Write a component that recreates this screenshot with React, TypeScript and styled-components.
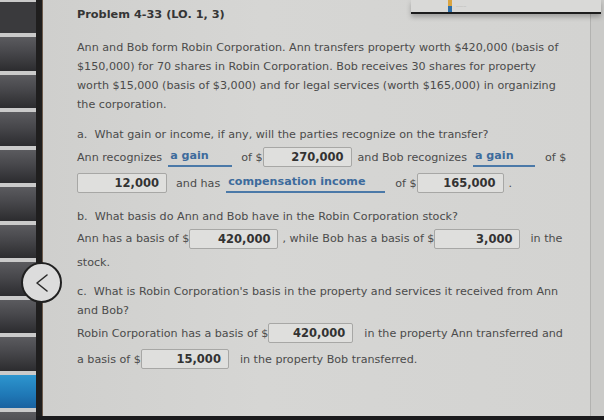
import React from 'react';
import styled, { createGlobalStyle } from 'styled-components';

const GlobalStyle = createGlobalStyle`
	html, body {
		margin: 0;
		padding: 0;
		background: #1b1b1d;
	}
	* {
		box-sizing: border-box;
	}
`;

const Screen = styled.div`
	position: relative;
	width: 604px;
	height: 420px;
	display: flex;
	flex-direction: row;
	overflow: hidden;
	background: #1b1b1d;
	font-family: 'DejaVu Sans', Verdana, sans-serif;
`;

const Rail = styled.ul`
	width: 36px;
	margin: 0;
	padding: 33px 0 0;
	list-style: none;
	display: flex;
	flex-direction: column;
	background: linear-gradient(to bottom, #c9c9c9 0 2px, #3a3a3d 2px);
`;

const RailItem = styled.li<{ $active?: boolean }>`
	flex: 0 0 37.5px;
	border-top: 4px solid #cacaca;
	background: ${({ $active }) =>
		$active
			? 'linear-gradient(to bottom, #2d96cf, #1f78b6 60%, #1a62a0)'
			: 'linear-gradient(to bottom, #5b5b5f, #47474b 45%, #2c2c2f)'};
`;

const Divider = styled.div`
	width: 7px;
	height: 416px;
	background: #1f1e1e;
	border-right: 1px solid #6b5a4c;
`;

const Panel = styled.main`
	flex: 1;
	height: 416px;
	background: linear-gradient(to right, #cfcfcd, #d6d6d4 40%, #d3d3d1);
	padding: 7px 0 0 34px;
	color: #4b4b4b;
	font-size: 11.15px;
`;

const EdgeStrip = styled.div`
	width: 14px;
	height: 416px;
	background: #cacac8;
	border-left: 1px solid #b2b2b0;
`;

const Title = styled.h1`
	margin: 0;
	font-size: 11.3px;
	line-height: 15px;
	font-weight: bold;
	color: #353535;
`;

const Intro = styled.p`
	margin: 16px 0 0;
	line-height: 19px;
	width: 490px;
`;

const Question = styled.p<{ $gap?: number }>`
	margin: ${({ $gap }) => $gap ?? 12}px 0 0;
	line-height: 19px;
	width: 490px;
`;

const Part = styled.span`
	margin-right: 7px;
`;

const Answer = styled.div<{ $height?: number }>`
	display: flex;
	align-items: center;
	flex-wrap: nowrap;
	height: ${({ $height }) => $height ?? 25}px;
	white-space: nowrap;
`;

const Blank = styled.span<{ $width: number }>`
	display: inline-flex;
	align-items: center;
	justify-content: flex-end;
	width: ${({ $width }) => $width}px;
	height: 20px;
	padding-right: 7px;
	border: 1px solid #a7a7a5;
	border-radius: 2px;
	background: #dfdfdd;
	color: #333;
	font-weight: bold;
	font-size: 11.5px;
`;

const Choice = styled.span<{ $width: number }>`
	display: inline-block;
	width: ${({ $width }) => $width}px;
	margin: 2px 6px 0;
	padding: 0 2px 2px;
	border-bottom: 2px solid #4b79a8;
	color: #3d6b9c;
	font-weight: bold;
	line-height: 14px;
`;

const Gap = styled.span<{ $w: number }>`
	display: inline-block;
	width: ${({ $w }) => $w}px;
`;

const TopWindow = styled.div`
	position: absolute;
	top: 0;
	left: 411px;
	width: 190px;
	height: 14px;
	background: #d9d9d7;
	border-bottom: 2px solid #1d1d1d;
	box-shadow: 0 3px 5px rgba(0, 0, 0, 0.25);
	display: flex;
	align-items: center;
	gap: 4px;
	padding-left: 37px;
`;

const TinyIcon = styled.span`
	width: 4px;
	height: 12px;
	background: linear-gradient(to bottom, #d9a441 0 6px, #2d6ea8 6px);
`;

const TinyLabel = styled.span`
	font-size: 4px;
	color: #8c8c8c;
`;

const BackButton = styled.button`
	position: absolute;
	left: 21px;
	top: 262px;
	width: 41px;
	height: 41px;
	border-radius: 50%;
	border: 2px solid #202020;
	background: #dcdcdc;
	display: flex;
	align-items: center;
	justify-content: center;
	padding: 0;
`;

const railItems = Array.from({ length: 11 }, (_, i) => i);

export default function App() {
	return (
		<>
			<GlobalStyle />
			<Screen>
				<Rail>
					{railItems.map(i => (
						<RailItem key={i} $active={i === 9} />
					))}
				</Rail>
				<Divider />
				<Panel>
					<Title>Problem 4-33 (LO. 1, 3)</Title>
					<Intro>
						Ann and Bob form Robin Corporation. Ann transfers property worth $420,000 (basis of
						$150,000) for 70 shares in Robin Corporation. Bob receives 30 shares for property
						worth $15,000 (basis of $3,000) and for legal services (worth $165,000) in organizing
						the corporation.
					</Intro>

					<Question $gap={11}>
						<Part>a.</Part>What gain or income, if any, will the parties recognize on the transfer?
					</Question>
					<Answer $height={26}>
						Ann recognizes<Choice $width={64}>a gain</Choice>
						<Gap $w={3} />
						of $<Blank $width={89}>270,000</Blank>
						<Gap $w={6} />
						and Bob recognizes<Choice $width={62}>a gain</Choice>
						<Gap $w={4} />
						of $
					</Answer>
					<Answer $height={26}>
						<Blank $width={90}>12,000</Blank>
						<Gap $w={9} />
						and has<Choice $width={159}>compensation income</Choice>
						<Gap $w={4} />
						of $<Blank $width={87}>165,000</Blank>
						<Gap $w={5} />.
					</Answer>

					<Question $gap={11}>
						<Part>b.</Part>What basis do Ann and Bob have in the Robin Corporation stock?
					</Question>
					<Answer $height={25}>
						Ann has a basis of $<Blank $width={89}>420,000</Blank>
						<Gap $w={4} />, while Bob has a basis of $<Blank $width={86}>3,000</Blank>
						<Gap $w={10} />
						in the
					</Answer>
					<Question $gap={2}>stock.</Question>

					<Question $gap={10}>
						<Part>c.</Part>What is Robin Corporation's basis in the property and services it received from Ann
						<br />
						and Bob?
					</Question>
					<Answer $height={26}>
						Robin Corporation has a basis of $<Blank $width={85}>420,000</Blank>
						<Gap $w={11} />
						in the property Ann transferred and
					</Answer>
					<Answer $height={26}>
						a basis of $<Blank $width={88}>15,000</Blank>
						<Gap $w={11} />
						in the property Bob transferred.
					</Answer>
				</Panel>
				<EdgeStrip />
				<TopWindow>
					<TinyIcon />
					<TinyLabel>········</TinyLabel>
				</TopWindow>
				<BackButton aria-label="Back">
					<svg width="18" height="20" viewBox="0 0 18 20" fill="none">
						<path d="M14 2 L4 10 L14 18" stroke="#2a2a2a" strokeWidth="1.6" strokeLinecap="round" strokeLinejoin="round" />
					</svg>
				</BackButton>
			</Screen>
		</>
	);
}
